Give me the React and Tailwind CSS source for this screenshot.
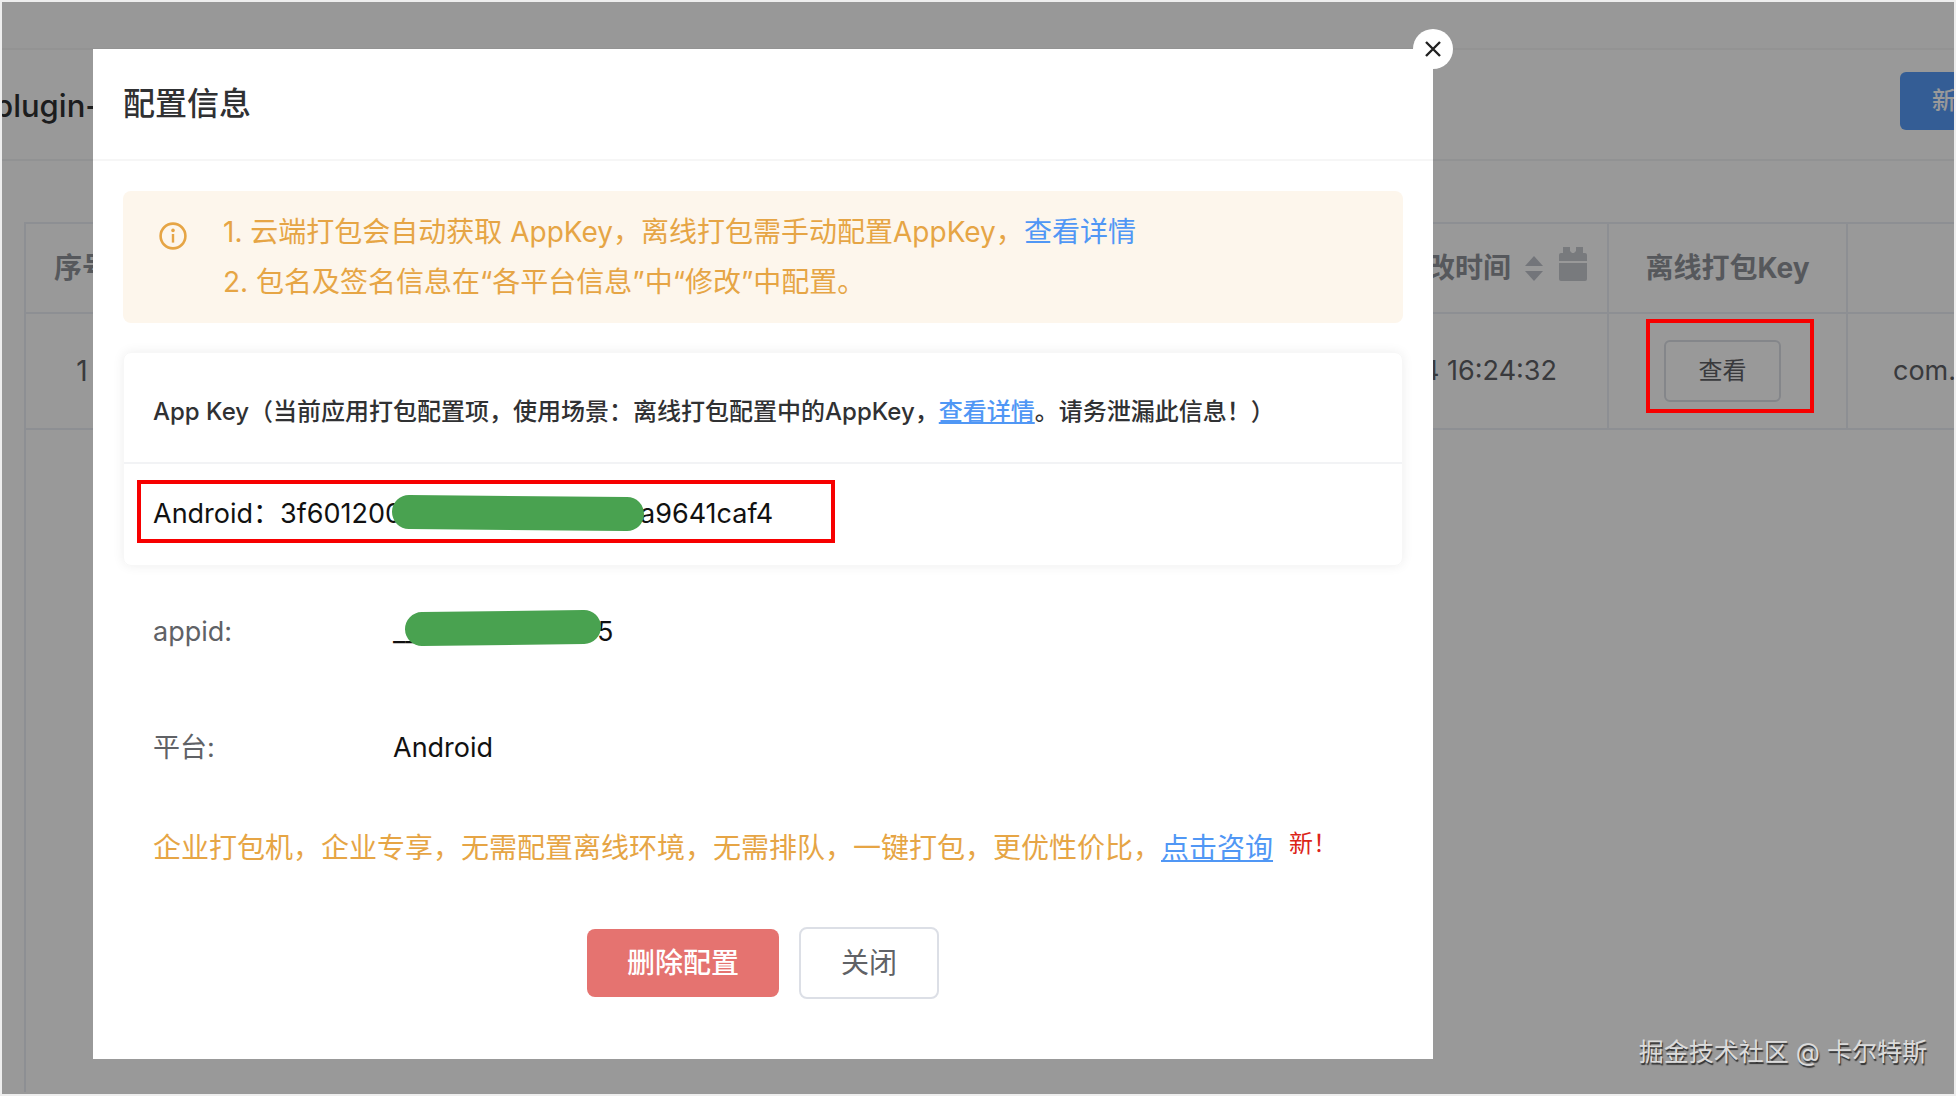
import React from "react";

function InfoIcon() {
  return (
    <svg className="mt-[15px] size-7 shrink-0" viewBox="0 0 28 28" fill="none" aria-hidden="true">
      <circle cx="14" cy="14" r="12.4" stroke="currentColor" strokeWidth="2.6" />
      <circle cx="14" cy="8.4" r="1.8" fill="currentColor" />
      <path d="M14 12v8.6" stroke="currentColor" strokeWidth="2.4" />
    </svg>
  );
}

function SortIcon() {
  return (
    <svg className="h-7 w-[18px]" viewBox="0 0 18 28" fill="#c0c4cc" aria-hidden="true">
      <path d="M9 2l9 10H0z" />
      <path d="M9 27l9-10H0z" />
    </svg>
  );
}

function CalendarIcon() {
  return (
    <svg className="h-[34px] w-7" viewBox="0 0 28 34" fill="#c8cbd1" aria-hidden="true">
      <path d="M4 0h7v4l2 2h2l2-2V0h7v6h2a2 2 0 0 1 2 2v6H0V8a2 2 0 0 1 2-2h2z" />
      <path d="M0 16h28v16a2 2 0 0 1-2 2H2a2 2 0 0 1-2-2z" />
    </svg>
  );
}

function InfoRow({ label, children }) {
  return (
    <div className="flex h-[116px] items-center text-[27px]">
      <dt className="w-60 text-[#606266]">{label}</dt>
      <dd className="flex items-center">{children}</dd>
    </div>
  );
}

function AppPage() {
  return (
    <main>
      <div className="h-12 border-b-2 border-[#f6f6f6] bg-[#fefefe]" />
      <header className="flex h-[111px] items-center justify-between border-b-2 border-[#f2f3f5]">
        <h1 className="-ml-2 pt-1 text-[31px] font-medium text-[#303133]">plugin-</h1>
        <button className="mb-2 h-[58px] w-[54px] overflow-hidden rounded-l-md bg-[#589cf8] pl-8 text-left text-2xl whitespace-nowrap font-medium text-white">
          新
        </button>
      </header>
      <div className="mt-[61px] ml-[22px] min-h-[870px] border-t-2 border-l-2 border-[#ebeef5]">
        <table className="w-full table-fixed border-collapse text-[28px] text-[#606266]">
          <colgroup>
            <col className="w-[112px]" />
            <col />
            <col className="w-[239px]" />
            <col className="w-[107px]" />
          </colgroup>
          <thead>
            <tr className="h-[89px] border-b-2 border-[#ebeef5] text-[28px] text-[#909399]">
              <th className="font-bold whitespace-nowrap">序号</th>
              <th className="border-r-2 border-[#ebeef5] pr-5">
                <div className="flex items-center justify-end">
                  <span className="mr-3.5">修改时间</span>
                  <SortIcon />
                  <span className="mb-2 ml-4">
                    <CalendarIcon />
                  </span>
                </div>
              </th>
              <th className="border-r-2 border-[#ebeef5]">离线打包Key</th>
              <th />
            </tr>
          </thead>
          <tbody>
            <tr className="h-[116px] border-b-2 border-[#ebeef5]">
              <td className="text-center">1</td>
              <td className="border-r-2 border-[#ebeef5] pr-[50px] text-right text-[27px]">4 16:24:32</td>
              <td className="border-r-2 border-[#ebeef5]">
                <div className="relative ml-[55px] flex w-fit">
                  <button className="h-[62px] w-[117px] rounded-md border-2 border-[#dcdfe6] text-2xl">查看</button>
                  <div className="pointer-events-none absolute -top-[21px] -right-[33px] -bottom-[11px] -left-[18px] z-20 border-4 border-[#f70000]" />
                </div>
              </td>
              <td className="overflow-hidden pl-[45px] text-[27px] whitespace-nowrap">com.</td>
            </tr>
          </tbody>
        </table>
      </div>
    </main>
  );
}

function ConfigDialog() {
  return (
    <section
      role="dialog"
      aria-labelledby="dialog-title"
      className="relative mt-[47px] ml-[91px] w-full max-w-[1340px] bg-white"
    >
      <button
        aria-label="关闭弹窗"
        className="absolute -top-5 -right-5 flex size-10 items-center justify-center rounded-full bg-white text-[#222]"
      >
        <svg className="size-4" viewBox="0 0 16 16" fill="none" stroke="currentColor" strokeWidth="2.4" aria-hidden="true">
          <path d="M1 1l14 14M15 1L1 15" />
        </svg>
      </button>
      <header className="flex h-[112px] items-center border-b-2 border-[#f6f6f6] px-[30px]">
        <h2 id="dialog-title" className="text-[32px] font-medium text-[#303133]">
          配置信息
        </h2>
      </header>
      <div className="px-[30px] pt-[30px] pb-[60px]">
        <div className="flex gap-9 rounded-lg bg-[#fdf6ec] py-4 pl-9 text-[28px] leading-[50px] text-[#e6a545]">
          <InfoIcon />
          <div>
            <p>
              1. 云端打包会自动获取 AppKey，离线打包需手动配置AppKey，
              <a href="#key-guide" className="text-[#5097f5]">查看详情</a>
            </p>
            <p>2. 包名及签名信息在“各平台信息”中“修改”中配置。</p>
          </div>
        </div>

        <div className="mt-[29px] rounded-lg border border-[#f7f7f7] shadow-[0_0_12px_rgba(0,0,0,0.07)]">
          <h3 className="flex h-[111px] items-center border-b-2 border-[#f2f3f5] px-[29px] pt-2 text-2xl font-medium text-[#303133]">
            <span>
              App Key（当前应用打包配置项，使用场景：离线打包配置中的AppKey，
              <a href="#key-guide" className="text-[#5097f5] underline">查看详情</a>
              。请务泄漏此信息！）
            </span>
          </h3>
          <div className="relative flex h-[101px] items-center px-[29px] text-[27px] text-[#111]">
            <span>Android：3f601200</span>
            <svg className="z-10 -mt-1 -ml-2.5 h-9 w-[252px]" viewBox="0 0 252 36" aria-hidden="true">
              <path d="M17 17l218 2" stroke="#49a250" strokeWidth="34" strokeLinecap="round" />
            </svg>
            <span className="-ml-1">a9641caf4</span>
            <div className="pointer-events-none absolute top-4 left-[13px] h-[63px] w-[698px] border-4 border-[#f70000]" />
          </div>
        </div>

        <dl className="mt-2 px-[30px]">
          <InfoRow label="appid:">
            <span className="text-[#111]">__UNI__</span>
            <svg className="z-10 -mt-2 -ml-[84px] h-9 w-[196px]" viewBox="0 0 196 36" aria-hidden="true">
              <path d="M17 19l162-2" stroke="#49a250" strokeWidth="34" strokeLinecap="round" />
            </svg>
            <span className="-ml-1 text-[#111]">5</span>
          </InfoRow>
          <InfoRow label="平台:">
            <span className="text-[#111]">Android</span>
          </InfoRow>
        </dl>

        <p className="mt-[15px] flex h-[54px] items-center px-[30px] text-[28px] whitespace-nowrap text-[#e6a545]">
          企业打包机，企业专享，无需配置离线环境，无需排队，一键打包，更优性价比，
          <a href="#consult" className="text-[#5097f5] underline">点击咨询</a>
          <span className="mb-2 ml-4 text-2xl text-[#dc2418]">新！</span>
        </p>

        <div className="mt-[52px] flex items-center justify-center gap-5 text-[28px]">
          <button className="h-[68px] rounded-lg bg-[#e57370] px-10 font-medium text-white">删除配置</button>
          <button className="h-[72px] rounded-lg border-2 border-[#dcdfe6] px-10 text-[#606266]">关闭</button>
        </div>
      </div>
    </section>
  );
}

export default function App() {
  return (
    <div
      lang="zh-CN"
      className="relative min-h-screen overflow-hidden border-2 border-[#eee] bg-white font-['Inter','Noto_Sans_CJK_SC',sans-serif]"
    >
      <AppPage />
      <div className="absolute inset-0 z-10 flex items-start bg-black/40">
        <ConfigDialog />
      </div>
      <p className="absolute right-[27px] bottom-[23px] z-20 text-[25px] text-[#dcdcdc] [text-shadow:1px_2px_1px_#333]">
        掘金技术社区 @ 卡尔特斯
      </p>
    </div>
  );
}
